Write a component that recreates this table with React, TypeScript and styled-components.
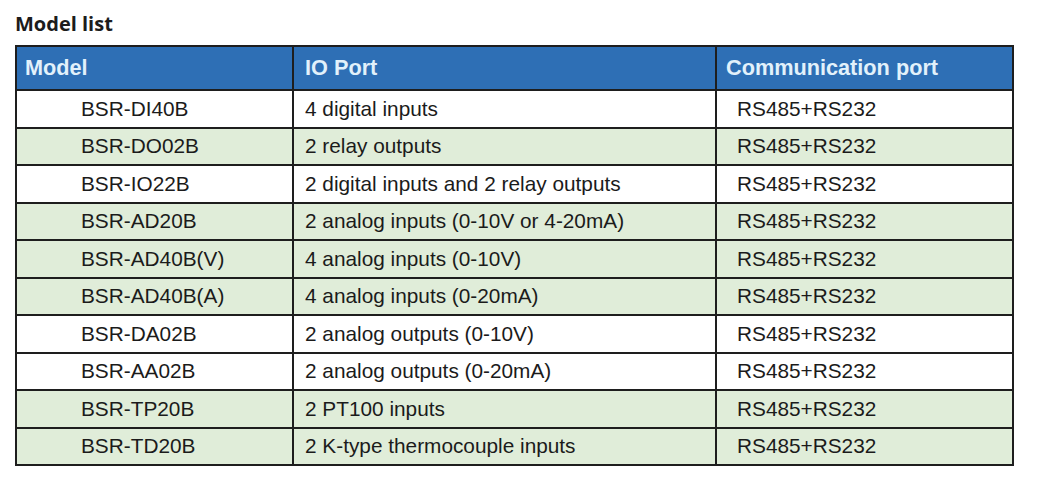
import React from 'react';
import styled, { createGlobalStyle } from 'styled-components';

const GlobalStyle = createGlobalStyle`
    html, body {
        margin: 0;
        padding: 0;
        background: #ffffff;
    }
`;

const Page = styled.div`
    padding: 12px 0 0 15px;
    width: 1000px;
`;

const Title = styled.h2`
    margin: 0 0 9px 0;
    font-family: 'Open Sans', 'Liberation Sans', sans-serif;
    font-size: 20px;
    line-height: 24px;
    font-weight: 700;
    color: #1c1c1c;
`;

const Table = styled.table`
    border-collapse: collapse;
    table-layout: fixed;
    width: 997px;
    font-family: 'Liberation Sans', Arial, sans-serif;
    font-size: 20.8px;
`;

const HeadCell = styled.th<{ $pad: number }>`
    height: 41px;
    padding: 0 0 1px ${({ $pad }) => $pad}px;
    border: 2px solid #1e1e1e;
    background-color: #2e6fb5;
    color: #e2f1fb;
    font-size: 21.7px;
    font-weight: 700;
    text-align: left;
    white-space: nowrap;
`;

const Row = styled.tr<{ $shaded: boolean }>`
    background-color: ${({ $shaded }) => ($shaded ? '#e0edd9' : '#ffffff')};
`;

const Cell = styled.td<{ $pad: number }>`
    height: 35.5px;
    padding: 0 0 0 ${({ $pad }) => $pad}px;
    border: 2px solid #1e1e1e;
    color: #1b1b1b;
    white-space: nowrap;
`;

const models = [
    { model: 'BSR-DI40B', io: '4 digital inputs', shaded: false },
    { model: 'BSR-DO02B', io: '2 relay outputs', shaded: true },
    { model: 'BSR-IO22B', io: '2 digital inputs and 2 relay outputs', shaded: false },
    { model: 'BSR-AD20B', io: '2 analog inputs (0-10V or 4-20mA)', shaded: true },
    { model: 'BSR-AD40B(V)', io: '4 analog inputs (0-10V)', shaded: true },
    { model: 'BSR-AD40B(A)', io: '4 analog inputs (0-20mA)', shaded: true },
    { model: 'BSR-DA02B', io: '2 analog outputs (0-10V)', shaded: false },
    { model: 'BSR-AA02B', io: '2 analog outputs (0-20mA)', shaded: false },
    { model: 'BSR-TP20B', io: '2 PT100 inputs', shaded: true },
    { model: 'BSR-TD20B', io: '2 K-type thermocouple inputs', shaded: true },
];

function App() {
    return (
        <Page>
            <GlobalStyle />
            <Title>Model list</Title>
            <Table>
                <colgroup>
                    <col style={{ width: 277 }} />
                    <col style={{ width: 423 }} />
                    <col style={{ width: 297 }} />
                </colgroup>
                <thead>
                    <tr>
                        <HeadCell $pad={8}>Model</HeadCell>
                        <HeadCell $pad={11}>IO Port</HeadCell>
                        <HeadCell $pad={9}>Communication port</HeadCell>
                    </tr>
                </thead>
                <tbody>
                    {models.map((m) => (
                        <Row key={m.model} $shaded={m.shaded}>
                            <Cell $pad={64}>{m.model}</Cell>
                            <Cell $pad={11}>{m.io}</Cell>
                            <Cell $pad={20}>RS485+RS232</Cell>
                        </Row>
                    ))}
                </tbody>
            </Table>
        </Page>
    );
}

export default App;
